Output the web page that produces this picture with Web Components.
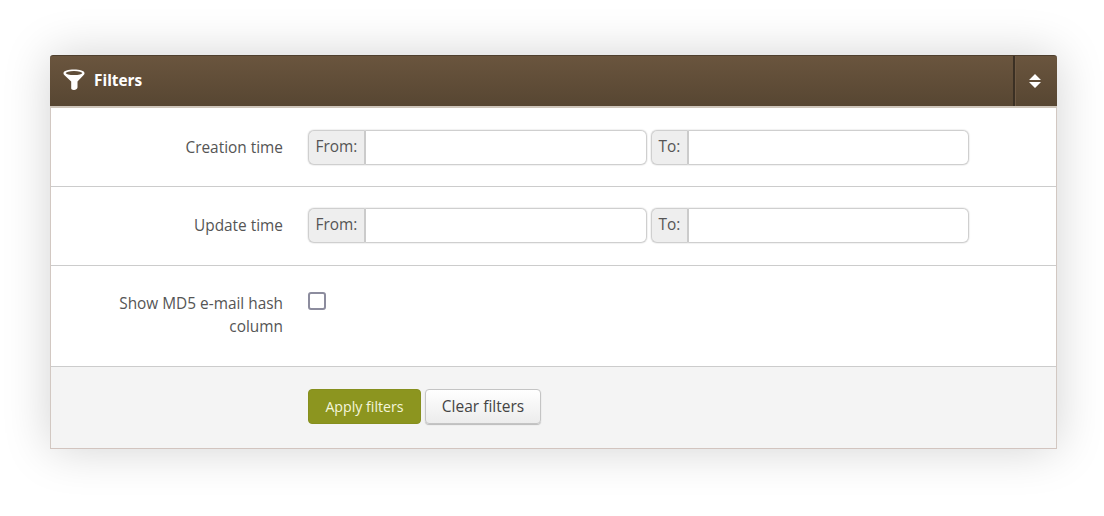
<!DOCTYPE html>
<html><head><meta charset="utf-8">
<style>
html,body{margin:0;background:#fff}
body{width:1104px;height:516px;overflow:hidden;font-family:"Open Sans",sans-serif;font-size:15.4px;color:#555}
</style></head><body>
<filter-panel></filter-panel>
<script>
const def=(name,html)=>customElements.define(name,class extends HTMLElement{
  connectedCallback(){ if(this.shadowRoot)return; const r=this.attachShadow({mode:'open'}); r.innerHTML=typeof html==='function'?html(this):html; }
});
def('date-field',el=>`<style>
:host{display:flex;height:35px;box-sizing:border-box;border-radius:6px;box-shadow:0 0 1.5px #bdbdbd}
.a{display:flex;align-items:center;justify-content:center;box-sizing:border-box;width:${el.getAttribute('addon')}px;padding-bottom:2px;background:#eee;border:1px solid #cfcfcf;border-right:0;border-radius:6px 0 0 6px;color:#555;font-size:15.4px;white-space:nowrap}
.i{flex:1;box-sizing:border-box;background:#fff;border:1px solid #cfcfcf;border-left:2px solid #cbcbcb;border-radius:0 6px 6px 0}
</style><span class="a">${el.getAttribute('label')}</span><div class="i"></div>`);
def('filter-row',`<style>
:host{display:grid;grid-template-columns:232px 1fr;column-gap:25px;box-sizing:border-box;border-bottom:1px solid #ccc;background:#fff}
.l{text-align:right;color:#555;line-height:23px;font-size:15.4px}
.c{display:flex;gap:4px}
:host([kind=date]) .l{padding-top:6px}
</style><div class="l"><slot name="label"></slot></div><div class="c"><slot></slot></div>`);
def('fp-button',`<style>
:host{display:inline-flex}
div{height:35px;box-sizing:border-box;display:flex;align-items:center;justify-content:center;border-radius:4px;padding-bottom:1px}
:host([primary]) div{width:113px;background:#8c951f;border:1px solid #868f1e;color:#f4f6dc;font-size:14.2px}
:host(:not([primary])) div{width:116px;background:linear-gradient(#fff,#ececec);border:1px solid #c4c4c4;color:#444;box-shadow:0 1px 1px #bbb;font-size:15.5px}
</style><div><slot></slot></div>`);
def('filter-panel',`<style>
:host{display:block;position:absolute;left:50px;top:55px;width:1007px;box-sizing:border-box;box-shadow:0 0 48px rgba(0,0,0,.18);border-radius:3px 3px 0 0}
header{height:53px;box-sizing:border-box;display:flex;align-items:stretch;background:linear-gradient(#6a553e,#574632);border-top:1px solid #4e3f2e;border-bottom:2px solid #cfc6bb;border-radius:3px 3px 0 0;color:#fff}
.t{flex:1;display:flex;align-items:center;gap:9px;padding:0 0 2px 13px;font-weight:700;font-size:15.4px;border-right:2px solid #3b3024}
.t svg{display:block}
.s{width:42px;box-sizing:border-box;border-left:1px solid #6f5a44;display:flex;align-items:center;justify-content:center;padding-right:3px}
main{border:1px solid #d2c8c2;border-top:0;border-bottom-color:#d2c4bf}
footer{height:81px;box-sizing:border-box;background:#f4f4f4;padding:22px 0 0 257px;display:flex;gap:4px;align-items:flex-start}
.cb{width:18px;height:18px;box-sizing:border-box;border:2px solid #8c8c9e;border-radius:3px;background:#fff}
</style>
<header><div class="t"><svg width="22" height="22" viewBox="0 0 22 22"><path fill="#fff" d="M.5 4.2C.5 1.9 5.2.6 11 .6s10.500 1.300 10.500 3.600c0 1-.6 1.700-1.300 2.400L14.500 12.500v5.800c0 .7-.3 1.200-.9 1.600-.8.600-1.900 1.100-3 1.100-1.400 0-2.400-.6-2.400-1.700v-6.800L1.800 6.600C1.100 5.900.5 5.200.5 4.200Z"/><ellipse cx="11" cy="4.100" rx="8.300" ry="2" fill="#5f4d39"/></svg><span>Filters</span></div>
<div class="s"><svg width="12" height="14" viewBox="0 0 12 14"><path fill="#fff" d="M6 0 12 6H0ZM0 8h12l-6 6Z"/></svg></div></header>
<main>
<filter-row kind="date" style="height:79px;padding-top:22px"><span slot="label">Creation time</span><date-field label="From:" addon="56" style="width:339px"></date-field><date-field label="To:" addon="36" style="width:318px"></date-field></filter-row>
<filter-row kind="date" style="height:79px;padding-top:21px"><span slot="label">Update time</span><date-field label="From:" addon="56" style="width:339px"></date-field><date-field label="To:" addon="36" style="width:318px"></date-field></filter-row>
<filter-row style="height:101px;padding-top:26px"><span slot="label">Show MD5 e-mail hash<br>column</span><div class="cb"></div></filter-row>
<footer><fp-button primary>Apply filters</fp-button><fp-button>Clear filters</fp-button></footer>
</main>`);
</script>
</body></html>
